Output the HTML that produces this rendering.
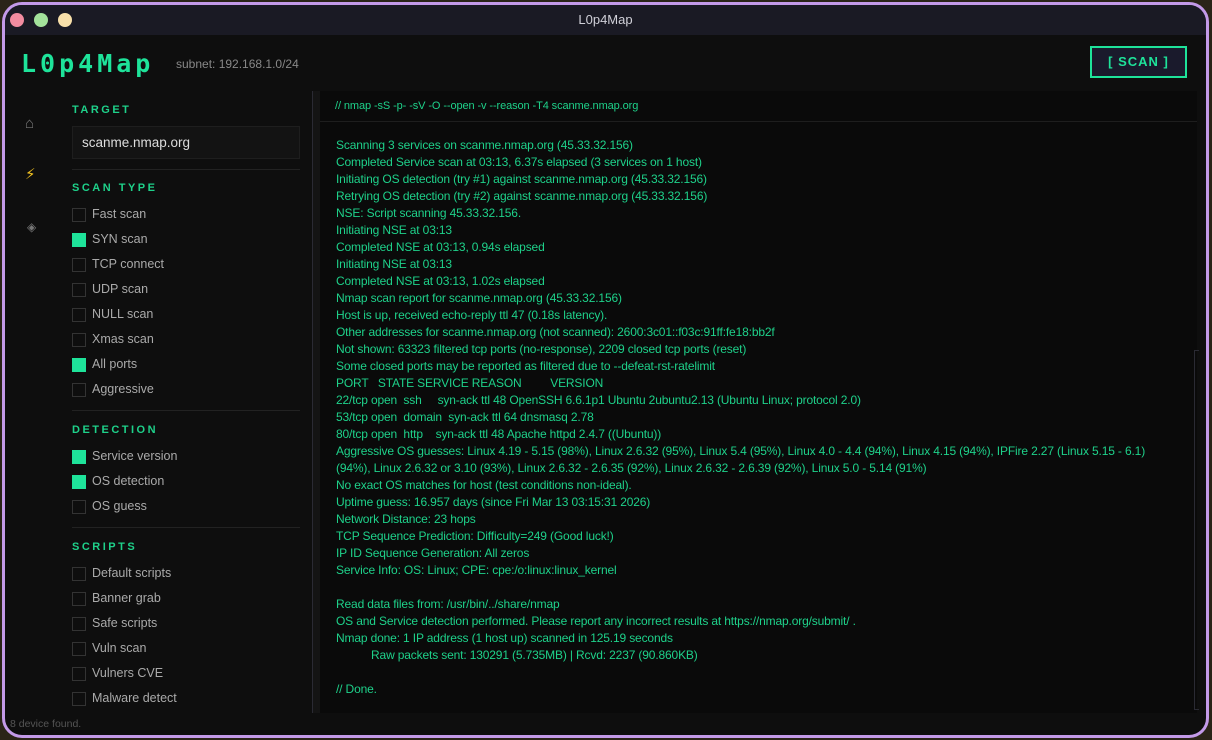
<!DOCTYPE html><html><head><style>
*{margin:0;padding:0;box-sizing:border-box}
body{width:1212px;height:740px;background:#2a2418;font-family:"Liberation Sans","DejaVu Sans",sans-serif;overflow:hidden;position:relative}
.win{position:absolute;left:2px;top:2px;width:1207px;height:736px;border:3px solid #c39ae8;border-radius:20px;background:#0e0e0e;overflow:hidden}
.tb{position:absolute;left:0;top:0;right:0;height:30px;background:#1a1a24;color:#d0d0d8;font-size:13px;text-align:center;line-height:30px}
.dot{position:absolute;top:8px;width:14px;height:14px;border-radius:50%}
.logo{position:absolute;left:16px;top:44px;color:#1ee39a;font-size:25px;font-weight:bold;letter-spacing:4px;font-family:"DejaVu Sans Mono","Liberation Mono",monospace}
.sub{position:absolute;left:171px;top:52px;color:#888;font-size:12px}
.scan{position:absolute;left:1085px;top:41px;width:97px;height:32px;border:2px solid #1ee39a;background:#1a1a2c;color:#1ee39a;font-weight:bold;font-size:13px;text-align:center;line-height:28px;letter-spacing:1px}
.ic{position:absolute;left:20px;font-size:15px;color:#777}
.h{position:absolute;left:67px;color:#1ed18a;font-size:11px;letter-spacing:2.5px;font-weight:bold}
.div{position:absolute;left:67px;width:228px;height:1px;background:#222}
.cb{position:absolute;left:67px;width:14px;height:14px;border:1px solid #333;background:#0e0e0e}
.cb.on{background:#1ee39a;border-color:#1ee39a}
.lb{position:absolute;left:87px;color:#aaa;font-size:12.5px}
.inp{position:absolute;left:67px;top:121px;width:228px;height:33px;background:#131313;border:1px solid #1e1e1e;color:#ddd;font-size:13.5px;padding:8px 9px}
.term{position:absolute;left:315px;top:86px;width:877px;height:622px;background:#0a0a0a}
.th{height:31px;border-bottom:1px solid #1e1e1e;color:#1ed18a;font-size:11px;padding:9px 15px;letter-spacing:-0.1px}
.out{position:absolute;left:16px;top:46px;color:#1ed18a;font-size:12px;letter-spacing:-0.15px;line-height:17px;white-space:pre}
.sb{position:absolute;left:307px;top:86px;width:8px;height:622px;background:#141414;border-left:1px solid #2a2a33}
</style></head><body>
<div class="win">
<div class="tb">L0p4Map
<div class="dot" style="left:5px;background:#f28ca0"></div>
<div class="dot" style="left:29px;background:#a3e29b"></div>
<div class="dot" style="left:53px;background:#f8e0aa"></div></div>
<div class="logo">L0p4Map</div>
<div class="sub">subnet: 192.168.1.0/24</div>
<div class="scan">[ SCAN ]</div>
<div class="ic" style="top:110px">⌂</div>
<div class="ic" style="top:160px;color:#f0c020">⚡</div>
<div class="ic" style="top:215px;font-size:12px;left:22px">◈</div>
<div class="h" style="top:99px">TARGET</div>
<div class="inp">scanme.nmap.org</div>
<div class="div" style="top:164px"></div>
<div class="h" style="top:177px">SCAN TYPE</div>
<div class="cb" style="top:203px"></div><div class="lb" style="top:202px">Fast scan</div>
<div class="cb on" style="top:228px"></div><div class="lb" style="top:227px">SYN scan</div>
<div class="cb" style="top:253px"></div><div class="lb" style="top:252px">TCP connect</div>
<div class="cb" style="top:278px"></div><div class="lb" style="top:277px">UDP scan</div>
<div class="cb" style="top:303px"></div><div class="lb" style="top:302px">NULL scan</div>
<div class="cb" style="top:328px"></div><div class="lb" style="top:327px">Xmas scan</div>
<div class="cb on" style="top:353px"></div><div class="lb" style="top:352px">All ports</div>
<div class="cb" style="top:378px"></div><div class="lb" style="top:377px">Aggressive</div>
<div class="div" style="top:405px"></div>
<div class="h" style="top:419px">DETECTION</div>
<div class="cb on" style="top:445px"></div><div class="lb" style="top:444px">Service version</div>
<div class="cb on" style="top:470px"></div><div class="lb" style="top:469px">OS detection</div>
<div class="cb" style="top:495px"></div><div class="lb" style="top:494px">OS guess</div>
<div class="div" style="top:522px"></div>
<div class="h" style="top:536px">SCRIPTS</div>
<div class="cb" style="top:562px"></div><div class="lb" style="top:561px">Default scripts</div>
<div class="cb" style="top:587px"></div><div class="lb" style="top:586px">Banner grab</div>
<div class="cb" style="top:612px"></div><div class="lb" style="top:611px">Safe scripts</div>
<div class="cb" style="top:637px"></div><div class="lb" style="top:636px">Vuln scan</div>
<div class="cb" style="top:662px"></div><div class="lb" style="top:661px">Vulners CVE</div>
<div class="cb" style="top:687px"></div><div class="lb" style="top:686px">Malware detect</div>
<div style="position:absolute;left:5px;top:713px;color:#555;font-size:10.5px">8 device found.</div>
<div class="sb"></div>
<div class="term"><div class="th">// nmap -sS -p- -sV -O --open -v --reason -T4 scanme.nmap.org</div>
<div class="out">Scanning 3 services on scanme.nmap.org (45.33.32.156)
Completed Service scan at 03:13, 6.37s elapsed (3 services on 1 host)
Initiating OS detection (try #1) against scanme.nmap.org (45.33.32.156)
Retrying OS detection (try #2) against scanme.nmap.org (45.33.32.156)
NSE: Script scanning 45.33.32.156.
Initiating NSE at 03:13
Completed NSE at 03:13, 0.94s elapsed
Initiating NSE at 03:13
Completed NSE at 03:13, 1.02s elapsed
Nmap scan report for scanme.nmap.org (45.33.32.156)
Host is up, received echo-reply ttl 47 (0.18s latency).
Other addresses for scanme.nmap.org (not scanned): 2600:3c01::f03c:91ff:fe18:bb2f
Not shown: 63323 filtered tcp ports (no-response), 2209 closed tcp ports (reset)
Some closed ports may be reported as filtered due to --defeat-rst-ratelimit
PORT   STATE SERVICE REASON         VERSION
22/tcp open  ssh     syn-ack ttl 48 OpenSSH 6.6.1p1 Ubuntu 2ubuntu2.13 (Ubuntu Linux; protocol 2.0)
53/tcp open  domain  syn-ack ttl 64 dnsmasq 2.78
80/tcp open  http    syn-ack ttl 48 Apache httpd 2.4.7 ((Ubuntu))
Aggressive OS guesses: Linux 4.19 - 5.15 (98%), Linux 2.6.32 (95%), Linux 5.4 (95%), Linux 4.0 - 4.4 (94%), Linux 4.15 (94%), IPFire 2.27 (Linux 5.15 - 6.1)
(94%), Linux 2.6.32 or 3.10 (93%), Linux 2.6.32 - 2.6.35 (92%), Linux 2.6.32 - 2.6.39 (92%), Linux 5.0 - 5.14 (91%)
No exact OS matches for host (test conditions non-ideal).
Uptime guess: 16.957 days (since Fri Mar 13 03:15:31 2026)
Network Distance: 23 hops
TCP Sequence Prediction: Difficulty=249 (Good luck!)
IP ID Sequence Generation: All zeros
Service Info: OS: Linux; CPE: cpe:/o:linux:linux_kernel

Read data files from: /usr/bin/../share/nmap
OS and Service detection performed. Please report any incorrect results at https://nmap.org/submit/ .
Nmap done: 1 IP address (1 host up) scanned in 125.19 seconds
           Raw packets sent: 130291 (5.735MB) | Rcvd: 2237 (90.860KB)

// Done.</div></div>
<div style="position:absolute;left:1189px;top:345px;width:5px;height:360px;border:1px solid #2a2a33;border-right:none"></div>
</div>
</body></html>
